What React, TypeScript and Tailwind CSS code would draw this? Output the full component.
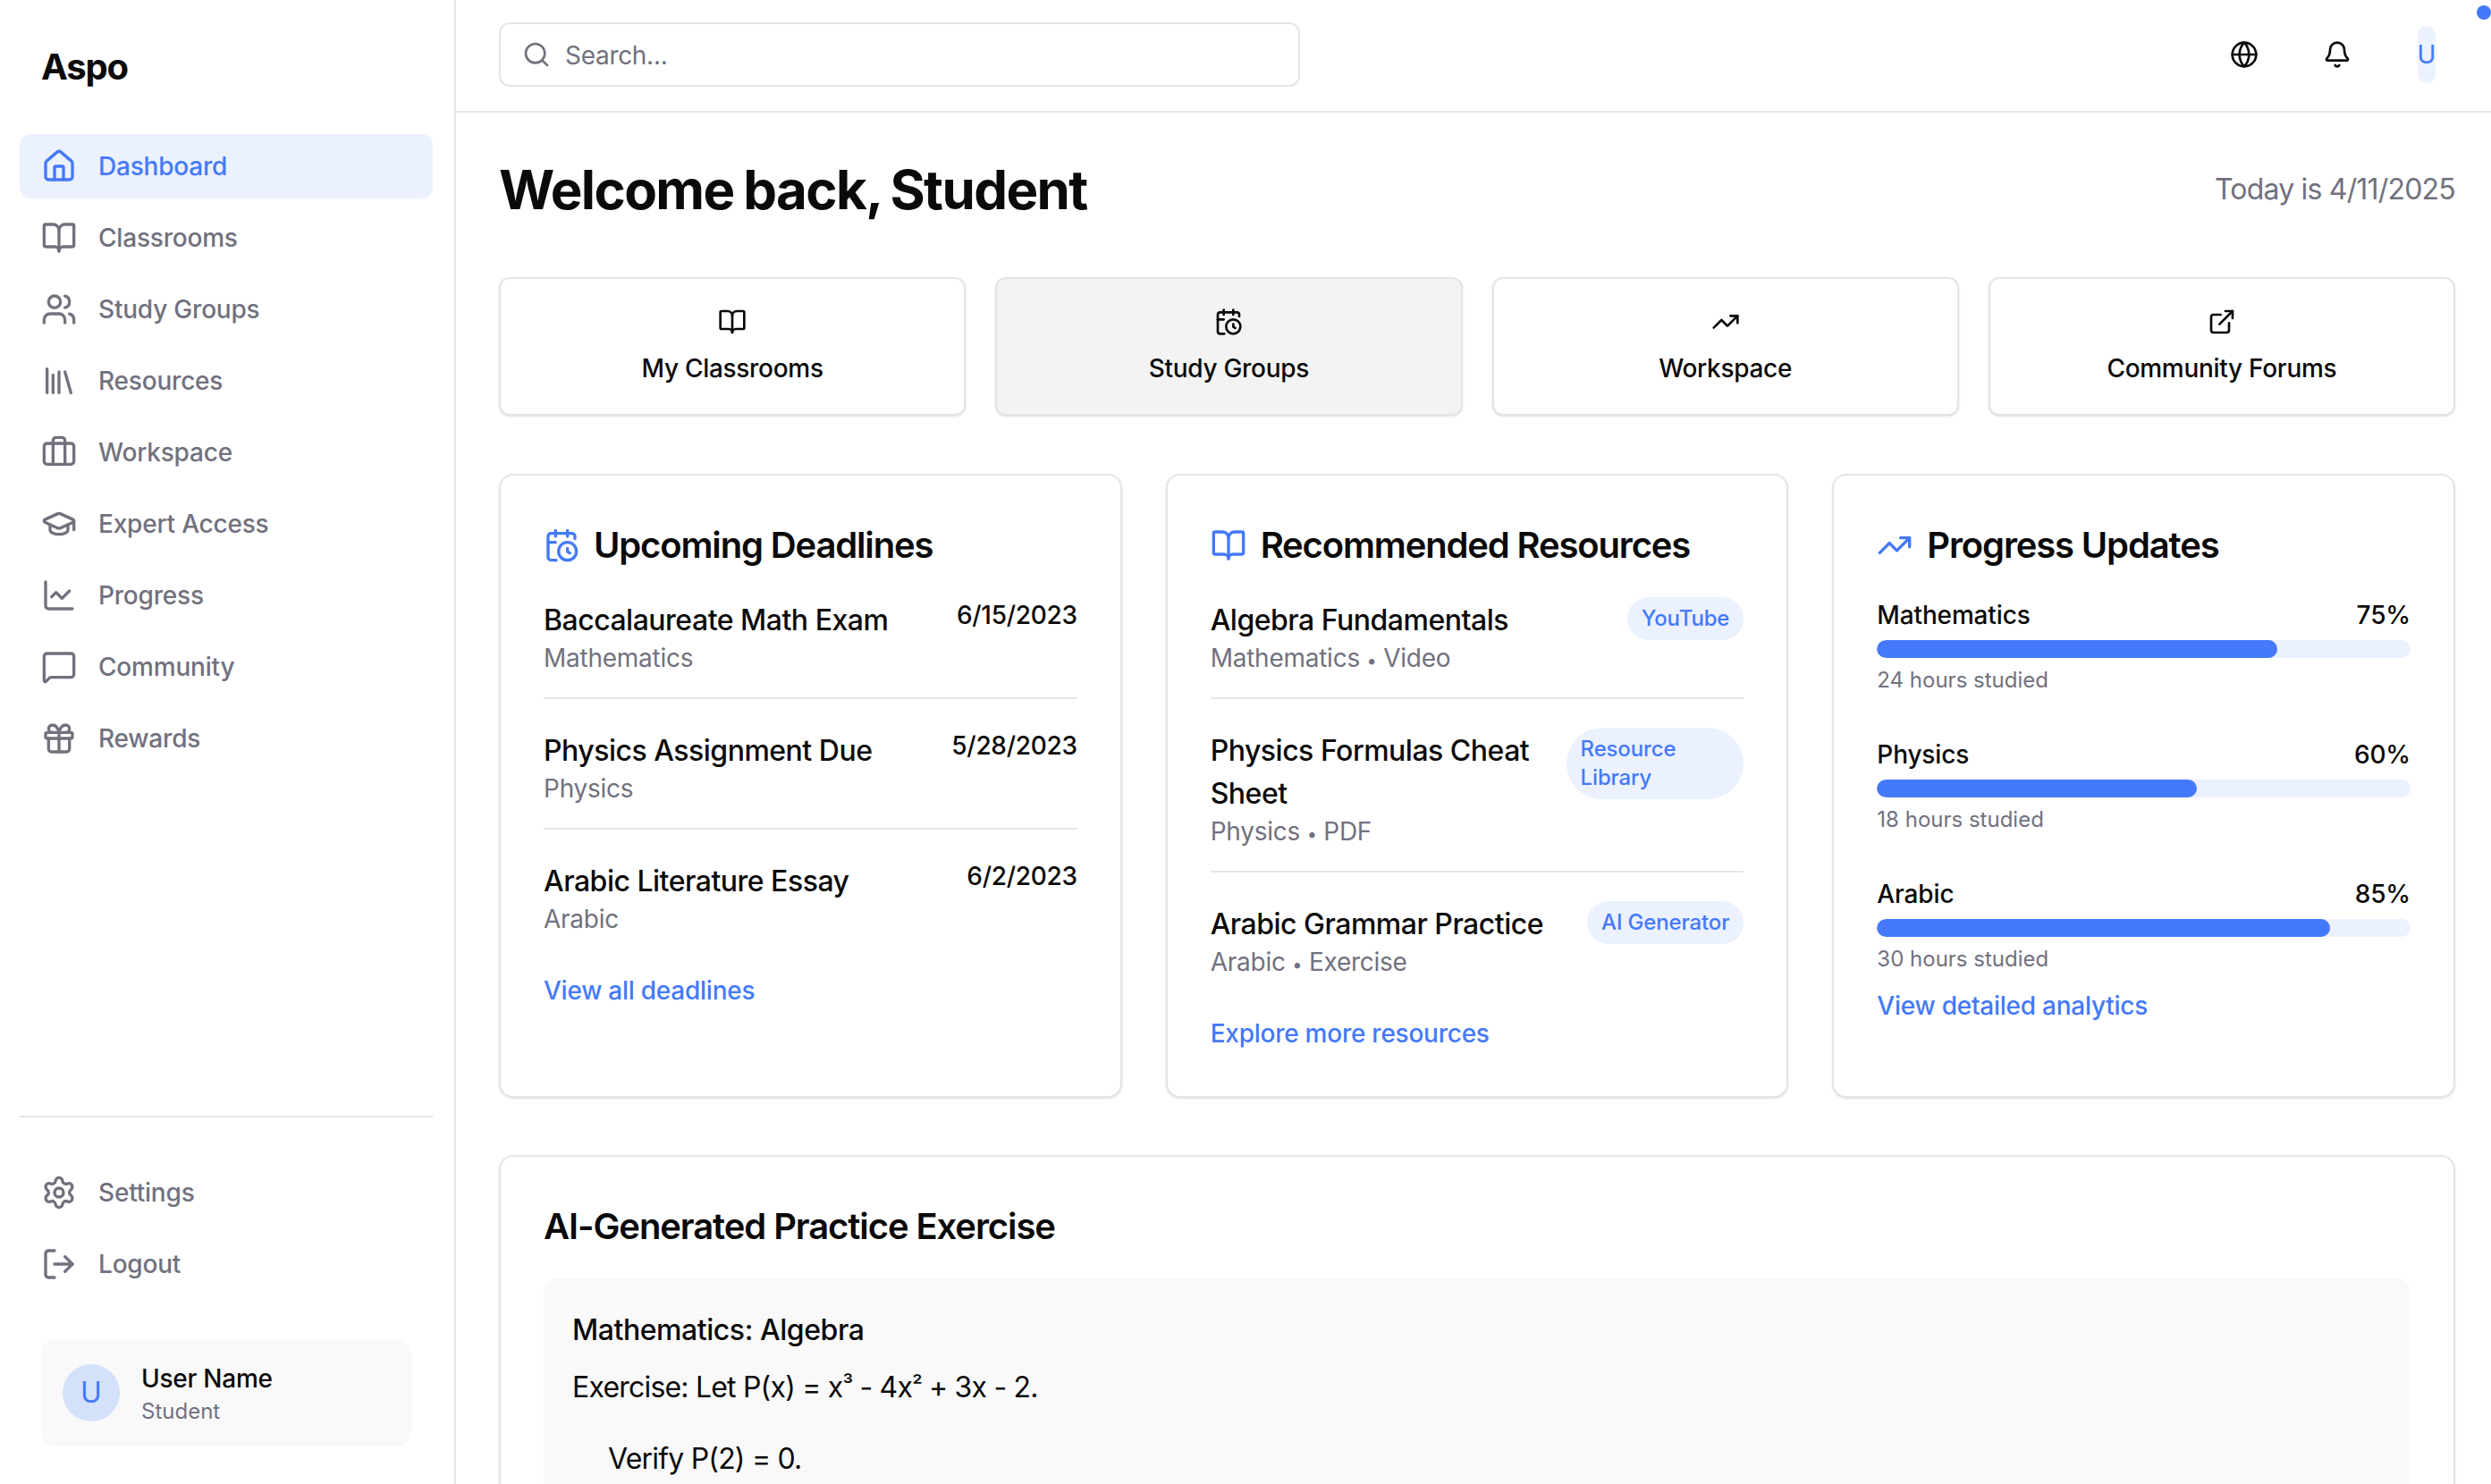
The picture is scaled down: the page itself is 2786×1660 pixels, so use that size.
import React from "react";
import {
  House, BookOpen, Users, Library, Briefcase, GraduationCap, ChartLine, MessageSquare, Gift,
  Settings, LogOut, Globe, Bell, CalendarClock, TrendingUp, ExternalLink, Search,
} from "lucide-react";

const nav = [
  { label: "Dashboard", Icon: House, active: true },
  { label: "Classrooms", Icon: BookOpen },
  { label: "Study Groups", Icon: Users },
  { label: "Resources", Icon: Library },
  { label: "Workspace", Icon: Briefcase },
  { label: "Expert Access", Icon: GraduationCap },
  { label: "Progress", Icon: ChartLine },
  { label: "Community", Icon: MessageSquare },
  { label: "Rewards", Icon: Gift },
];

function NavItem({ label, Icon, active }: { label: string; Icon: any; active?: boolean }) {
  return (
    <a
      className={
        active
          ? "flex h-[72px] items-center gap-6 rounded-[12px] bg-[#ebf1fe] px-6 text-[28px] font-[450] tracking-[-0.2px] text-[#4479fb]"
          : "flex h-[72px] items-center gap-6 rounded-[12px] px-6 text-[28px] font-[450] tracking-[-0.2px] text-[#71717e]"
      }
    >
      <Icon size={40} className="shrink-0" />
      <span>{label}</span>
    </a>
  );
}

function Sidebar() {
  return (
    <aside className="flex h-full w-[510px] shrink-0 flex-col border-r-2 border-[#e5e5e5] bg-white pr-[24px] pb-[42px] pl-[22px]">
      <div className="px-[24px] pt-[47px] text-[40px] leading-[56px] font-bold tracking-[-1.2px] text-[#0a0a0a]">Aspo</div>
      <nav className="mt-[47px] flex flex-col gap-2">
        {nav.map((n) => (
          <NavItem key={n.label} {...n} />
        ))}
      </nav>
      <div className="mt-auto border-t-2 border-[#e5e5e5] pt-[48px]">
        <div className="flex flex-col gap-2">
          <NavItem label="Settings" Icon={Settings} />
          <NavItem label="Logout" Icon={LogOut} />
        </div>
        <div className="mx-[24px] mt-[48px] flex h-[120px] items-center gap-[24px] rounded-[16px] bg-[#f9f9f9] px-[24px]">
          <div className="flex h-[64px] w-[64px] items-center justify-center rounded-full bg-[#d4e1fb] text-[32px] text-[#4479fb]">U</div>
          <div>
            <div className="pt-[2px] text-[28px] leading-[40px] font-medium tracking-[-0.25px] text-[#0a0a0a]">User Name</div>
            <div className="text-[24px] leading-[34px] text-[#71717e]">Student</div>
          </div>
        </div>
      </div>
    </aside>
  );
}

function Header() {
  return (
    <header className="relative flex h-[126px] shrink-0 items-center border-b-2 border-[#e5e5e5] pr-[62px] pb-[2px] pl-[48px]">
      <div className="flex h-[72px] w-[896px] items-center gap-[16px] rounded-[12px] border-2 border-[#e5e5e5] px-[24px] text-[28px] tracking-[-0.3px] text-[#71717e]">
        <Search size={32} className="shrink-0" />
        <span className="pt-[2px]">Search...</span>
      </div>
      <div className="ml-auto flex items-center text-[#0a0a0a]">
        <div className="flex w-[64px] justify-center"><Globe size={32} /></div>
        <div className="ml-[40px] flex w-[64px] justify-center"><Bell size={32} /></div>
        <div className="ml-[58px] flex h-[64px] w-[20px] items-center justify-center rounded-full bg-[#ebf1fe] text-[28px] text-[#4479fb]">U</div>
      </div>
      <span className="absolute top-[6px] right-0 h-[16px] w-[16px] rounded-full bg-[#4479fb]" />
    </header>
  );
}

function Quick({ label, Icon, hover }: { label: string; Icon: any; hover?: boolean }) {
  return (
    <div
      className={
        hover
          ? "flex h-[155px] flex-col items-center justify-center gap-[16px] rounded-[12px] border-2 border-[#e5e5e5] bg-[#f3f3f3] text-[28px] font-[450] tracking-[-0.3px] text-[#0a0a0a] shadow-sm"
          : "flex h-[155px] flex-col items-center justify-center gap-[16px] rounded-[12px] border-2 border-[#e5e5e5] bg-white text-[28px] font-[450] tracking-[-0.3px] text-[#0a0a0a] shadow-sm"
      }
    >
      <Icon size={32} />
      <span className="leading-[40px]">{label}</span>
    </div>
  );
}

function Card({ title, Icon, children }: { title: string; Icon: any; children: React.ReactNode }) {
  return (
    <section className="rounded-[16px] border-2 border-[#e5e5e5] bg-white px-[48px] pt-[48px] pb-[50px] shadow-sm">
      <h2 className="mb-[30px] flex items-center gap-[16px] pt-[2px] text-[40px] leading-[56px] font-semibold tracking-[-1.15px] text-[#0a0a0a]">
        <Icon size={40} className="shrink-0 text-[#4479fb]" />
        {title}
      </h2>
      {children}
    </section>
  );
}

function Row({ title, sub, right, last }: { title: string; sub: React.ReactNode; right: React.ReactNode; last?: boolean }) {
  return (
    <div className={last ? "flex items-start justify-between gap-[8px] pb-[24px]" : "mb-[32px] flex items-start justify-between gap-[8px] border-b-2 border-[#e5e5e5] pb-[24px]"}>
      <div>
        <div className="pt-[2px] text-[32px] leading-[48px] font-[450] tracking-[-0.5px] text-[#0a0a0a]">{title}</div>
        <div className="-mt-[2px] text-[28px] leading-[40px] tracking-[-0.25px] text-[#71717e]">{sub}</div>
      </div>
      {right}
    </div>
  );
}

const Sub = ({ a, b }: { a: string; b: string }) => (
  <>
    {a} <span className="text-[20px] leading-[0]">•</span> {b}
  </>
);

const DateText = ({ d }: { d: string }) => (
  <div className="shrink-0 text-[28px] leading-[40px] font-[450] tracking-[-0.3px] text-[#0a0a0a]">{d}</div>
);

const Badge = ({ t }: { t: string }) => (
  <div className="rounded-full bg-[#ebf1fe] px-[16px] py-[8px] text-[24px] leading-[32px] font-medium tracking-[-0.15px] text-[#4479fb]">{t}</div>
);

const LinkText = ({ t }: { t: string }) => (
  <a className="mt-[16px] block text-[28px] leading-[40px] font-[450] tracking-[-0.25px] text-[#4479fb]">{t}</a>
);

function Prog({ name, pct, hours }: { name: string; pct: number; hours: string }) {
  return (
    <div>
      <div className="flex justify-between text-[28px] leading-[40px] font-[450] tracking-[-0.15px] text-[#0a0a0a]">
        <span>{name}</span>
        <span>{pct}%</span>
      </div>
      <div className="mt-[8px] h-[20px] overflow-hidden rounded-full bg-[#ebf1fe]">
        <div className="h-full rounded-full bg-[#4479fb]" style={{ width: `${pct}%` }} />
      </div>
      <div className="mt-[9px] text-[24px] leading-[32px] text-[#71717e]">{hours}</div>
    </div>
  );
}

export default function App() {
  return (
    <div className="flex h-[1660px] w-[2786px] overflow-hidden bg-white font-[Inter,sans-serif]">
      <Sidebar />
      <div className="flex min-w-0 flex-1 flex-col overflow-hidden">
        <Header />
        <main className="flex-1 overflow-hidden pt-[44px] pr-[40px] pl-[48px]">
          <div className="flex h-[84px] items-center justify-between">
            <h1 className="text-[60px] leading-[84px] font-bold tracking-[-1.6px] [word-spacing:-2px] text-[#0a0a0a]">Welcome back, Student</h1>
            <div className="text-[32px] leading-[48px] tracking-[-0.8px] text-[#71717e]">Today is 4/11/2025</div>
          </div>
          <div className="mt-[56px] grid grid-cols-4 gap-[33px]">
            <Quick label="My Classrooms" Icon={BookOpen} />
            <Quick label="Study Groups" Icon={CalendarClock} hover />
            <Quick label="Workspace" Icon={TrendingUp} />
            <Quick label="Community Forums" Icon={ExternalLink} />
          </div>
          <div className="mt-[65px] grid grid-cols-3 gap-[49px]">
            <Card title="Upcoming Deadlines" Icon={CalendarClock}>
              <Row title="Baccalaureate Math Exam" sub="Mathematics" right={<DateText d="6/15/2023" />} />
              <Row title="Physics Assignment Due" sub="Physics" right={<DateText d="5/28/2023" />} />
              <Row title="Arabic Literature Essay" sub="Arabic" right={<DateText d="6/2/2023" />} last />
              <LinkText t="View all deadlines" />
            </Card>
            <Card title="Recommended Resources" Icon={BookOpen}>
              <Row title="Algebra Fundamentals" sub={<Sub a="Mathematics" b="Video" />} right={<Badge t="YouTube" />} />
              <Row title="Physics Formulas Cheat Sheet" sub={<Sub a="Physics" b="PDF" />} right={<Badge t="Resource Library" />} />
              <Row title="Arabic Grammar Practice" sub={<Sub a="Arabic" b="Exercise" />} right={<Badge t="AI Generator" />} last />
              <LinkText t="Explore more resources" />
            </Card>
            <Card title="Progress Updates" Icon={TrendingUp}>
              <div className="flex flex-col gap-[47px]">
                <Prog name="Mathematics" pct={75} hours="24 hours studied" />
                <Prog name="Physics" pct={60} hours="18 hours studied" />
                <Prog name="Arabic" pct={85} hours="30 hours studied" />
              </div>
              <LinkText t="View detailed analytics" />
            </Card>
          </div>
          <section className="mt-[64px] rounded-[16px] border-2 border-[#e5e5e5] bg-white p-[48px] shadow-sm">
            <h2 className="mb-[30px] pt-[2px] text-[40px] leading-[56px] font-semibold tracking-[-1.1px] text-[#0a0a0a]">AI-Generated Practice Exercise</h2>
            <div className="rounded-[16px] bg-[#f9f9f9] px-[32px] pt-[34px] pb-[32px] text-[32px] leading-[48px] tracking-[-0.8px] text-[#0a0a0a]">
              <p className="font-[450] tracking-[-0.45px]">Mathematics: Algebra</p>
              <p className="mt-[16px]">
                Exercise: Let P(x) = x<span className="align-[4px] text-[26px] leading-[0]">³</span> - 4x<span className="align-[4px] text-[26px] leading-[0]">²</span> + 3x - 2.
              </p>
              <p className="mt-[32px] pl-[40px]">Verify P(2) = 0.</p>
            </div>
          </section>
        </main>
      </div>
    </div>
  );
}
